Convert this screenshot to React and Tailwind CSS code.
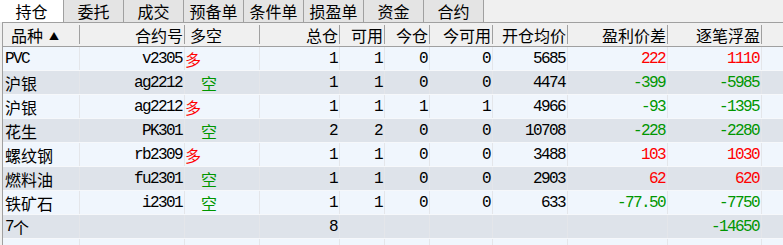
import React from "react";

const CJK = { fontFamily: '"Noto Sans CJK SC", "Noto Sans", sans-serif' };
const MONO = { fontFamily: '"Liberation Mono", "Noto Sans CJK SC", monospace' };

const tabs = ["委托", "成交", "预备单", "条件单", "损盈单", "资金", "合约"];

const rows = [
  { name: "PVC", code: "v2305", dir: "多", total: "1", avail: "1", today: "0", todayAvail: "0", open: "5685", diff: "222", pnl: "1110" },
  { name: "沪银", code: "ag2212", dir: "空", total: "1", avail: "1", today: "0", todayAvail: "0", open: "4474", diff: "-399", pnl: "-5985" },
  { name: "沪银", code: "ag2212", dir: "多", total: "1", avail: "1", today: "1", todayAvail: "1", open: "4966", diff: "-93", pnl: "-1395" },
  { name: "花生", code: "PK301", dir: "空", total: "2", avail: "2", today: "0", todayAvail: "0", open: "10708", diff: "-228", pnl: "-2280" },
  { name: "螺纹钢", code: "rb2309", dir: "多", total: "1", avail: "1", today: "0", todayAvail: "0", open: "3488", diff: "103", pnl: "1030" },
  { name: "燃料油", code: "fu2301", dir: "空", total: "1", avail: "1", today: "0", todayAvail: "0", open: "2903", diff: "62", pnl: "620" },
  { name: "铁矿石", code: "i2301", dir: "空", total: "1", avail: "1", today: "0", todayAvail: "0", open: "633", diff: "-77.50", pnl: "-7750" },
];

const GRID =
  "grid grid-cols-[77px_105px_75px_80px_45px_45px_63px_75px_100px_94px_1fr]";

function HCell({ children, align = "right", sep = true, pl = "" }) {
  return (
    <div className="flex items-center h-full">
      <div
        className={`flex-1 whitespace-nowrap text-[16px] leading-none text-black ${
          align === "right" ? "text-right pr-[1px]" : `text-left ${pl}`
        }`}
        style={CJK}
      >
        {children}
      </div>
      {sep && <div className="w-px h-[19px] bg-[#a0a0a0]" />}
    </div>
  );
}

function Cell({ children, align = "right", cls = "", last = false }) {
  return (
    <div
      className={`flex items-center h-full whitespace-nowrap ${
        last ? "" : "border-r border-[#e4e6ea]"
      } ${align === "right" ? "justify-end pr-[2px]" : "justify-start"} ${cls}`}
    >
      {children}
    </div>
  );
}

const Num = ({ children, color = "text-black" }) => (
  <span className={`text-[16px] tracking-[-1.6px] leading-none ${color}`} style={MONO}>
    {children}
  </span>
);

const color = (v) => (v.startsWith("-") ? "text-[#009600]" : "text-[#ff0000]");

export default function App() {
  return (
    <div className="w-[783px] h-[245px] bg-[#f0f0f0] overflow-hidden">
      {/* Tab bar */}
      <div className="flex h-[22px]">
        <div
          className="w-[63px] h-full bg-white flex items-center justify-center text-[16px] leading-none text-black"
          style={CJK}
        >
          持仓
        </div>
        {tabs.map((t) => (
          <div
            key={t}
            className="w-[60px] h-full bg-[#e4e4e4] border-l border-[#a0a0a0] flex items-center justify-center text-[16px] leading-none text-black"
            style={CJK}
          >
            {t}
          </div>
        ))}
        <div className="flex-1 h-full border-l border-[#a0a0a0]" />
      </div>

      {/* Table */}
      <div className="ml-[2px] border-l border-t border-[#a0a0a0] h-[223px] overflow-hidden">
        {/* Header */}
        <div className={`${GRID} h-[24px] border-b border-[#a0a0a0] bg-[#f0f0f0]`}>
          <HCell align="left" pl="pl-[8px]">
            品种<span className="ml-[6px] text-[10px] relative top-[-2px]">▲</span>
          </HCell>
          <HCell>合约号</HCell>
          <HCell align="left" pl="pl-[5px]">多空</HCell>
          <HCell>总仓</HCell>
          <HCell>可用</HCell>
          <HCell>今仓</HCell>
          <HCell>今可用</HCell>
          <HCell>开仓均价</HCell>
          <HCell>盈利价差</HCell>
          <HCell>逐笔浮盈</HCell>
          <div />
        </div>

        {rows.map((r, i) => (
          <div
            key={i}
            className={`${GRID} h-[24px] border-b border-[#f6f8fb] ${
              i % 2 === 0 ? "bg-[#f0f6fd]" : "bg-[#dee3ea]"
            }`}
          >
            <Cell align="left" cls="pl-[2px]">
              {/^[A-Za-z]/.test(r.name) ? (
                <Num>{r.name}</Num>
              ) : (
                <span className="text-[16px] leading-none text-black" style={CJK}>
                  {r.name}
                </span>
              )}
            </Cell>
            <Cell>
              <Num>{r.code}</Num>
            </Cell>
            <Cell align="left" cls={r.dir === "空" ? "pl-[16px]" : "pl-0"}>
              <span
                className={`text-[16px] leading-none ${
                  r.dir === "多" ? "text-[#ff0000]" : "text-[#009600]"
                }`}
                style={CJK}
              >
                {r.dir}
              </span>
            </Cell>
            <Cell>
              <Num>{r.total}</Num>
            </Cell>
            <Cell>
              <Num>{r.avail}</Num>
            </Cell>
            <Cell>
              <Num>{r.today}</Num>
            </Cell>
            <Cell>
              <Num>{r.todayAvail}</Num>
            </Cell>
            <Cell>
              <Num>{r.open}</Num>
            </Cell>
            <Cell>
              <Num color={color(r.diff)}>{r.diff}</Num>
            </Cell>
            <Cell>
              <Num color={color(r.pnl)}>{r.pnl}</Num>
            </Cell>
            <Cell last />
          </div>
        ))}

        {/* Summary row */}
        <div className={`${GRID} h-[24px] border-b border-[#f6f8fb] bg-[#dee3ea]`}>
          <Cell align="left" cls="pl-[2px]">
            <Num>7</Num>
            <span className="text-[16px] leading-none text-black" style={CJK}>
              个
            </span>
          </Cell>
          <Cell />
          <Cell />
          <Cell>
            <Num>8</Num>
          </Cell>
          <Cell />
          <Cell />
          <Cell />
          <Cell />
          <Cell />
          <Cell>
            <Num color="text-[#009600]">-14650</Num>
          </Cell>
          <Cell last />
        </div>

        {/* Partial empty row */}
        <div className={`${GRID} h-[24px] bg-[#f0f6fd]`}>
          {Array.from({ length: 10 }).map((_, k) => (
            <Cell key={k} />
          ))}
          <Cell last />
        </div>
      </div>
    </div>
  );
}
